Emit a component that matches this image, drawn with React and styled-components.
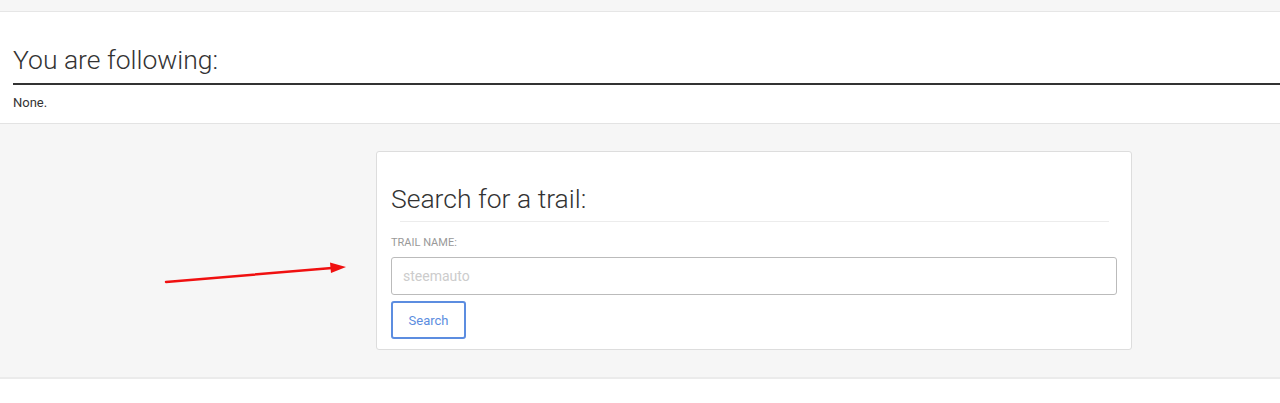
import styled, { createGlobalStyle } from "styled-components";

const GlobalStyle = createGlobalStyle`
  body {
    margin: 0;
    background: #fff;
    font-family: Roboto, "Liberation Sans", sans-serif;
    color: #333;
  }
`;

const Page = styled.div`
  padding-top: 11px;
  background: #f6f6f6;
`;

const FollowPanel = styled.section`
  background: #fff;
  border-top: 1px solid #e6e6e6;
  border-bottom: 1px solid #e3e3e3;
  padding: 31px 0 12px 13px;
  height: 113px;
  box-sizing: border-box;
`;

const PanelTitle = styled.h2`
  margin: 0;
  font-weight: 300;
  font-size: 26.5px;
  line-height: 34px;
  color: #333;
  border-bottom: 2px solid #333;
  padding-bottom: 6px;
`;

const Note = styled.p`
  margin: 10px 0 0;
  font-size: 13px;
  color: #333;
`;

const SearchArea = styled.div`
  position: relative;
  height: 255px;
  padding-top: 27px;
  box-sizing: border-box;
  background: #f6f6f6;
  border-bottom: 2px solid #ebebeb;
`;

const Card = styled.div`
  width: 756px;
  margin-left: 376px;
  box-sizing: border-box;
  background: #fff;
  border: 1px solid #ddd;
  border-radius: 3px;
  padding: 30px 14px 10px 14px;
  height: 199px;
`;

const CardTitle = styled.h3`
  margin: 0 8px 0 0;
  font-weight: 300;
  font-size: 26.5px;
  line-height: 34px;
  color: #333;
  position: relative;
  padding-bottom: 6px;

  &::after {
    content: "";
    position: absolute;
    left: 9px;
    right: 0;
    bottom: 0;
    height: 1px;
    background: #ececec;
  }
`;

const FieldLabel = styled.label`
  display: block;
  margin-top: 14px;
  font-size: 11px;
  line-height: 14px;
  color: #999;
  text-transform: uppercase;
`;

const TextInput = styled.input`
  display: block;
  box-sizing: border-box;
  width: 726px;
  height: 38px;
  margin-top: 7px;
  padding: 0 11px;
  border: 1px solid #bbb;
  border-radius: 3px;
  font-family: Roboto, "Liberation Sans", sans-serif;
  font-size: 14px;
  color: #333;
  outline: none;

  &::placeholder {
    color: #ccc;
  }
`;

const Button = styled.button`
  margin-top: 6px;
  width: 75px;
  height: 38px;
  background: #fff;
  border: 2px solid #5c8de0;
  border-radius: 3px;
  color: #5c8de0;
  font-family: Roboto, "Liberation Sans", sans-serif;
  font-size: 13px;
  cursor: pointer;
`;

const Arrow = styled.svg`
  position: absolute;
  left: 160px;
  top: 136px;
`;

export default function App() {
  return (
    <>
      <GlobalStyle />
      <Page>
        <FollowPanel>
          <PanelTitle>You are following:</PanelTitle>
          <Note>None.</Note>
        </FollowPanel>
        <SearchArea>
          <Arrow width="200" height="30" viewBox="0 0 200 30">
            <line x1="6" y1="22" x2="172" y2="8" stroke="#f01010" strokeWidth="2.5" strokeLinecap="round" />
            <polygon points="186,7 170,2.5 171,13" fill="#f01010" />
          </Arrow>
          <Card>
            <CardTitle>Search for a trail:</CardTitle>
            <FieldLabel>Trail name:</FieldLabel>
            <TextInput placeholder="steemauto" autoFocus />
            <Button>Search</Button>
          </Card>
        </SearchArea>
      </Page>
    </>
  );
}
